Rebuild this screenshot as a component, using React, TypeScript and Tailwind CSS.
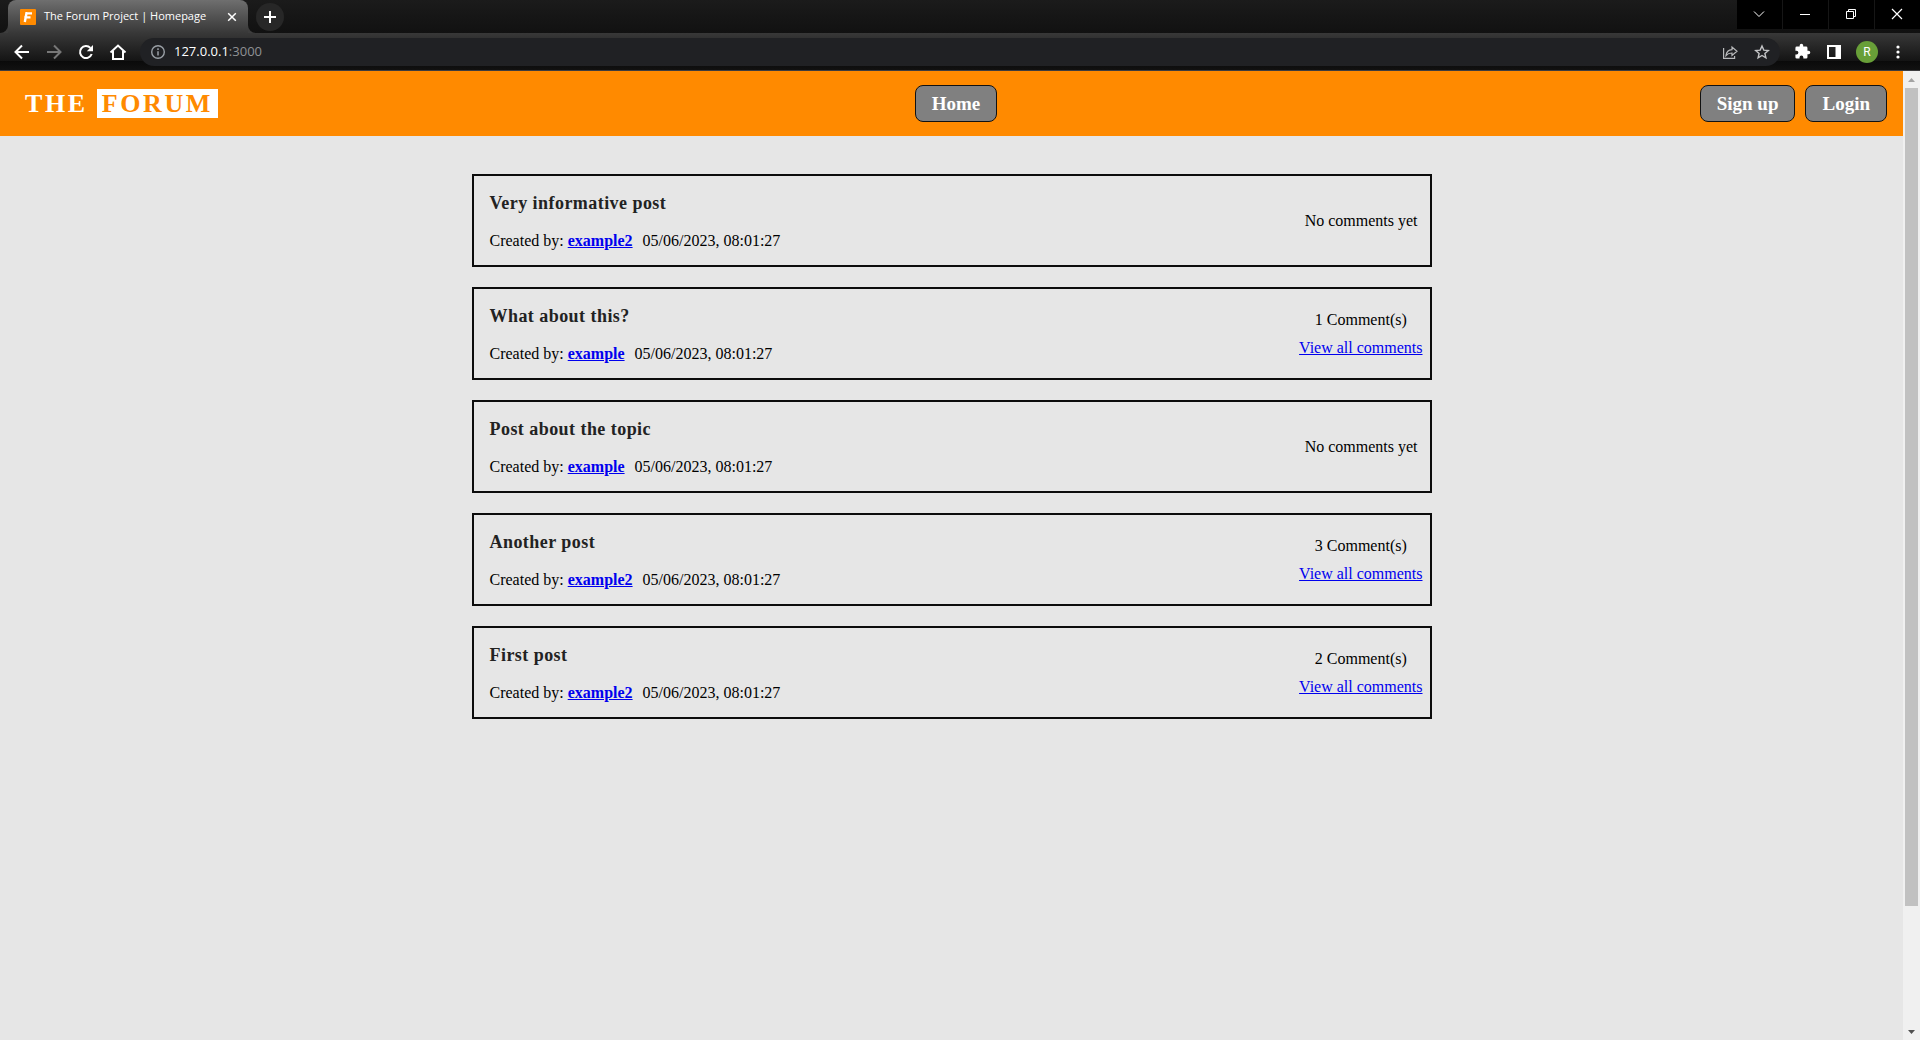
import type { ReactNode } from "react";

type Post = { title: string; author: string; comments: number };

const posts: Post[] = [
  { title: "Very informative post", author: "example2", comments: 0 },
  { title: "What about this?", author: "example", comments: 1 },
  { title: "Post about the topic", author: "example", comments: 0 },
  { title: "Another post", author: "example2", comments: 3 },
  { title: "First post", author: "example2", comments: 2 },
];

function IconButton({ label, children, className = "" }: { label: string; children: ReactNode; className?: string }) {
  return (
    <button type="button" aria-label={label} className={`flex shrink-0 items-center justify-center ${className}`}>
      {children}
    </button>
  );
}

function TabStrip() {
  return (
    <div className="flex h-[33px] justify-between bg-gradient-to-b from-[#1b1b1b] to-[#111111]">
      <div className="flex pl-2">
        <div className="relative flex w-60 items-center rounded-t-lg bg-gradient-to-b from-[#6f6f6f] to-[#383838] pr-2 pl-3">
          <svg aria-hidden="true" className="absolute bottom-0 -left-2 size-2" viewBox="0 0 8 8">
            <path d="M8 0v8H0a8 8 0 0 0 8-8z" fill="#3d3d3d" />
          </svg>
          <svg aria-hidden="true" className="absolute -right-2 bottom-0 size-2" viewBox="0 0 8 8">
            <path d="M0 0v8h8a8 8 0 0 1-8-8z" fill="#3d3d3d" />
          </svg>
          <svg aria-hidden="true" className="size-4 shrink-0" viewBox="0 0 16 16">
            <rect width="16" height="16" rx="1" fill="#ff8a00" />
            <path d="M5.600 4.400H12M4.300 8.400H10.500M6.600 3.600L4.800 13" stroke="#fff" strokeWidth="2.400" fill="none" />
          </svg>
          <span className="ml-2 flex-1 whitespace-nowrap font-['Open_Sans',sans-serif] text-[11px] text-white">
            The Forum Project | Homepage
          </span>
          <IconButton label="Close tab" className="size-4">
            <svg className="size-4" viewBox="0 0 16 16">
              <path d="M4.200 4.200l7.600 7.600M11.800 4.200l-7.600 7.600" stroke="#fff" strokeWidth="1.500" />
            </svg>
          </IconButton>
        </div>
        <IconButton label="New tab" className="mt-[3px] ml-2 size-7 rounded-full bg-[#272727]">
          <svg className="size-7" viewBox="0 0 28 28">
            <path d="M14 8v12M8 14h12" stroke="#fff" strokeWidth="2" />
          </svg>
        </IconButton>
      </div>
      <div className="flex h-[29px] gap-px bg-[#161616]">
        <IconButton label="Search tabs" className="w-[45px] bg-black pr-px pb-px">
          <svg className="size-4" viewBox="0 0 16 16">
            <path d="M3 5.500l5 5 5-5" stroke="#fff" fill="none" />
          </svg>
        </IconButton>
        <IconButton label="Minimize" className="w-[45px] bg-black pr-px pb-px">
          <svg className="size-4" viewBox="0 0 16 16">
            <path d="M3 8.500h10" stroke="#fff" />
          </svg>
        </IconButton>
        <IconButton label="Restore" className="w-[45px] bg-black pr-px pb-px">
          <svg className="size-4" viewBox="0 0 16 16">
            <path d="M3.500 5.500h7v7h-7zM5.500 5.500v-2h7v7h-2" stroke="#fff" fill="none" />
          </svg>
        </IconButton>
        <IconButton label="Close" className="w-[45px] bg-black pr-px pb-px">
          <svg className="size-4" viewBox="0 0 16 16">
            <path d="M3 3l10 10M13 3L3 13" stroke="#fff" strokeWidth="1.200" />
          </svg>
        </IconButton>
      </div>
    </div>
  );
}

function Toolbar() {
  return (
    <div className="flex h-[38px] items-center border-b border-[#3c3c3f] bg-[linear-gradient(#383838,#141414_28px,#0a0a0a_28px,#111111)]">
      <div className="flex gap-3 pl-3">
        <IconButton label="Back" className="size-5">
          <svg className="size-5" viewBox="0 0 20 20">
            <path d="M17 10H4.500M10 3.500L3.500 10l6.500 6.500" stroke="#fff" strokeWidth="2" fill="none" />
          </svg>
        </IconButton>
        <IconButton label="Forward" className="size-5">
          <svg className="size-5" viewBox="0 0 20 20">
            <path d="M3 10h12.500M10 3.500l6.500 6.500-6.500 6.500" stroke="#777" strokeWidth="2" fill="none" />
          </svg>
        </IconButton>
        <IconButton label="Reload" className="size-5">
          <svg className="size-5" viewBox="0 0 20 20">
            <path d="M15.700 12a6 6 0 1 1-1.300-6.100" stroke="#fff" strokeWidth="2" fill="none" />
            <path d="M17 3v6.200h-6.200z" fill="#fff" />
          </svg>
        </IconButton>
        <IconButton label="Home page" className="size-5">
          <svg className="size-5" viewBox="0 0 20 20">
            <path d="M2.500 10.500L10 3.500l7.500 7M5 9v8h10V9" stroke="#fff" strokeWidth="2" fill="none" />
          </svg>
        </IconButton>
      </div>
      <div className="ml-3 flex h-7 flex-1 items-center rounded-full bg-[#202124] pr-2.5 pl-2.5">
        <svg aria-hidden="true" className="size-4 shrink-0" viewBox="0 0 16 16">
          <circle cx="8" cy="8" r="6.300" stroke="#9aa0a6" strokeWidth="1.400" fill="none" />
          <path d="M8 7.200v4.200M8 4.300v1.600" stroke="#9aa0a6" strokeWidth="1.500" />
        </svg>
        <a href="#address" className="ml-2 flex-1 font-['Open_Sans',sans-serif] text-[13px] text-[#8f9194]">
          <span className="text-white">127.0.0.1</span>:3000
        </a>
        <IconButton label="Share" className="size-4">
          <svg className="size-4" viewBox="0 0 16 16" fill="none" stroke="#b8b9bb" strokeWidth="1.200">
            <path d="M1.600 4v10.400h11V12" />
            <path d="M4 11.500c.4-3.700 2.600-5.700 6-5.900V3l5 4.300-5 4.200V9c-2.700 0-4.600.8-6 2.500z" />
          </svg>
        </IconButton>
        <IconButton label="Bookmark this tab" className="ml-4 size-4">
          <svg className="size-4" viewBox="0 0 16 16">
            <path d="M8 2l1.800 4.100 4.500.4-3.400 3 1 4.300L8 11.500l-3.900 2.300 1-4.300-3.400-3 4.500-.4z" stroke="#c3c4c6" strokeWidth="1.400" fill="none" />
          </svg>
        </IconButton>
      </div>
      <div className="flex items-center pr-3 pl-3">
        <IconButton label="Extensions" className="size-5">
          <svg className="size-[17px]" viewBox="0 0 24 24">
            <path
              d="M20.500 11H19V7a2 2 0 0 0-2-2h-4V3.500a2.500 2.500 0 0 0-5 0V5H4a2 2 0 0 0-2 2v3.800h1.500a2.700 2.700 0 0 1 0 5.400H2V20a2 2 0 0 0 2 2h3.800v-1.500a2.700 2.700 0 0 1 5.400 0V22H17a2 2 0 0 0 2-2v-4h1.500a2.500 2.500 0 0 0 0-5z"
              fill="#fff"
            />
          </svg>
        </IconButton>
        <IconButton label="Side panel" className="ml-3 size-5">
          <svg className="size-5" viewBox="0 0 20 20">
            <path d="M3 3h14v14H3zM5 5v10h6.500V5z" fill="#fff" fillRule="evenodd" />
          </svg>
        </IconButton>
        <button
          type="button"
          aria-label="Profile"
          className="ml-3 flex size-[22px] items-center justify-center rounded-full bg-[#689f38] font-[Roboto,sans-serif] text-xs text-white"
        >
          R
        </button>
        <IconButton label="Menu" className="ml-2.5 size-5">
          <svg className="size-5" viewBox="0 0 20 20" fill="#fff">
            <circle cx="10" cy="5" r="1.600" />
            <circle cx="10" cy="10" r="1.600" />
            <circle cx="10" cy="15" r="1.600" />
          </svg>
        </IconButton>
      </div>
    </div>
  );
}

function NavLink({ children }: { children: ReactNode }) {
  return (
    <a href="#nav" className="rounded-lg border border-[#111111] bg-[#808080] px-4 py-1.5 text-[19px] leading-[23px] font-bold text-white">
      {children}
    </a>
  );
}

function SiteHeader() {
  return (
    <header className="flex h-[65px] items-center bg-[#ff8a00] pr-4 pl-[25px]">
      <div className="flex-1">
        <a href="#home" className="text-[26px] font-bold tracking-widest text-white">
          THE <span className="bg-white px-[5px] text-[#ff8a00]">FORUM</span>
        </a>
      </div>
      <NavLink>Home</NavLink>
      <nav className="flex flex-1 justify-end gap-2.5">
        <NavLink>Sign up</NavLink>
        <NavLink>Login</NavLink>
      </nav>
    </header>
  );
}

function PostCard({ post }: { post: Post }) {
  return (
    <article className="flex h-[93px] items-center justify-between border-2 border-[#0c0c0c] pr-[7px] pl-4">
      <div className="pt-0.5">
        <h2 className="text-lg leading-5 font-bold tracking-wide text-[#222222]">{post.title}</h2>
        <p className="mt-[18px] flex leading-5">
          <span>
            Created by:{" "}
            <a href="#author" className="font-bold text-[#0000ee] underline">
              {post.author}
            </a>
          </span>
          <time className="ml-2.5">05/06/2023, 08:01:27</time>
        </p>
      </div>
      {post.comments === 0 ? (
        <p className="pr-[5px] leading-7">No comments yet</p>
      ) : (
        <div className="text-center leading-7">
          <p>{post.comments} Comment(s)</p>
          <a href="#comments" className="block text-[#0000ee] underline">
            View all comments
          </a>
        </div>
      )}
    </article>
  );
}

function Scrollbar() {
  return (
    <div aria-hidden="true" className="flex w-[17px] shrink-0 flex-col bg-[#f0f0f0]">
      <svg className="size-[17px]" viewBox="0 0 17 17">
        <path d="M5 11h7L8.500 7z" fill="#a3a3a3" />
      </svg>
      <div className="flex-1">
        <div className="mx-0.5 h-[87.5%] bg-[#c1c1c1]" />
      </div>
      <svg className="size-[17px]" viewBox="0 0 17 17">
        <path d="M5 7h7l-3.500 4z" fill="#505050" />
      </svg>
    </div>
  );
}

export default function App() {
  return (
    <div className="flex h-screen flex-col bg-[#e6e6e6] font-['Liberation_Serif',serif] text-base text-black">
      <TabStrip />
      <Toolbar />
      <div className="flex min-h-0 flex-1">
        <div className="min-w-0 flex-1">
          <SiteHeader />
          <main className="mx-auto mt-[38px] flex max-w-[960px] flex-col gap-5">
            {posts.map((post) => (
              <PostCard key={post.title} post={post} />
            ))}
          </main>
        </div>
        <Scrollbar />
      </div>
    </div>
  );
}
